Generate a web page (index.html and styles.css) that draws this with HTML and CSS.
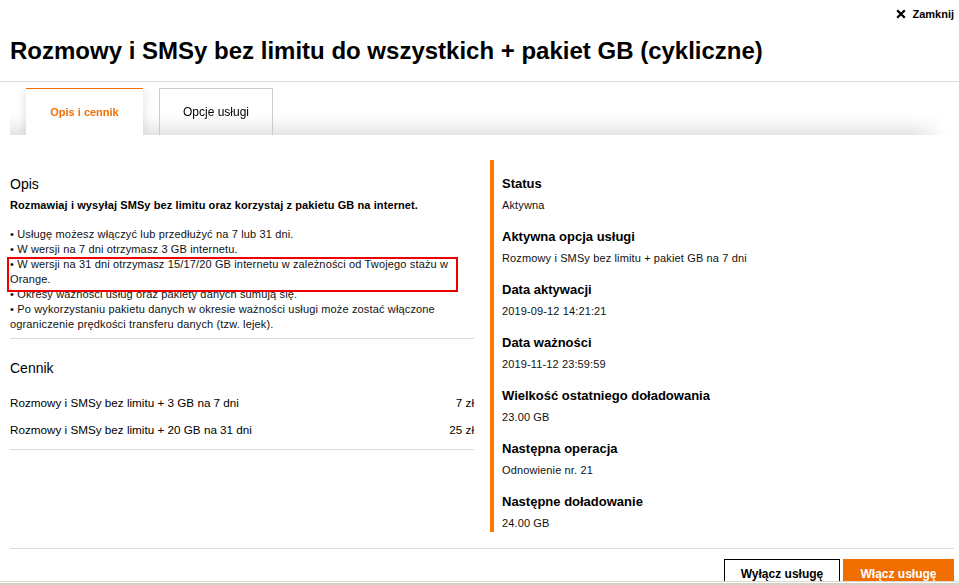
FILE: index.html
```html
<!DOCTYPE html>
<html lang="pl">
<head>
<meta charset="utf-8">
<title>Rozmowy i SMSy bez limitu</title>
<link rel="stylesheet" href="styles.css">
</head>
<body>
<div class="page">
  <header class="header">
    <div class="topbar">
      <a class="close" href="#">
        <svg class="close-icon" width="10" height="10" viewBox="0 0 10 10" aria-hidden="true">
          <path d="M1.2 1.2 L8.8 8.8 M8.8 1.2 L1.2 8.8" stroke="#000" stroke-width="2.3" fill="none"/>
        </svg>
        <span>Zamknij</span>
      </a>
    </div>
    <h1 class="title">Rozmowy i SMSy bez limitu do wszystkich + pakiet GB (cykliczne)</h1>
  </header>

  <nav class="tabs">
    <div class="tab tab-active">Opis i cennik</div>
    <div class="tab">Opcje usługi</div>
  </nav>

  <main class="content">
    <div class="left">
      <section class="desc">
        <h2 class="sec-title">Opis</h2>
        <p class="lead">Rozmawiaj i wysyłaj SMSy bez limitu oraz korzystaj z pakietu GB na internet.</p>
        <div class="bullets">
          <div>• Usługę możesz włączyć lub przedłużyć na 7 lub 31 dni.</div>
          <div>• W wersji na 7 dni otrzymasz 3 GB internetu.</div>
          <div class="highlight">• W wersji na 31 dni otrzymasz 15/17/20 GB internetu w zależności od Twojego stażu w<br>Orange.</div>
          <div>• Okresy ważności usług oraz pakiety danych sumują się.</div>
          <div>• Po wykorzystaniu pakietu danych w okresie ważności usługi może zostać włączone ograniczenie prędkości transferu danych (tzw. lejek).</div>
        </div>
      </section>
      <section class="prices">
        <h2 class="sec-title">Cennik</h2>
        <div class="price-list">
          <div class="price-row"><span>Rozmowy i SMSy bez limitu + 3 GB na 7 dni</span><span>7 zł</span></div>
          <div class="price-row"><span>Rozmowy i SMSy bez limitu + 20 GB na 31 dni</span><span>25 zł</span></div>
        </div>
      </section>
    </div>

    <dl class="right">
      <div class="info"><dt>Status</dt><dd>Aktywna</dd></div>
      <div class="info"><dt>Aktywna opcja usługi</dt><dd>Rozmowy i SMSy bez limitu + pakiet GB na 7 dni</dd></div>
      <div class="info"><dt>Data aktywacji</dt><dd>2019-09-12 14:21:21</dd></div>
      <div class="info"><dt>Data ważności</dt><dd>2019-11-12 23:59:59</dd></div>
      <div class="info"><dt>Wielkość ostatniego doładowania</dt><dd>23.00 GB</dd></div>
      <div class="info"><dt>Następna operacja</dt><dd>Odnowienie nr. 21</dd></div>
      <div class="info"><dt>Następne doładowanie</dt><dd>24.00 GB</dd></div>
    </dl>
  </main>

  <footer class="actions">
    <button class="btn btn-outline">Wyłącz usługę</button>
    <button class="btn btn-primary">Włącz usługę</button>
  </footer>
</div>
<div class="frame-edge"></div>
</body>
</html>
```

FILE: styles.css
```css
* { box-sizing: border-box; }

html, body {
  margin: 0;
  padding: 0;
  background: #fff;
}

body {
  font-family: "Liberation Sans", Arial, sans-serif;
  color: #000;
  font-size: 11px;
  width: 959px;
  height: 585px;
  overflow: hidden;
}

.page {
  height: 581px;
  overflow: hidden;
}

/* header */
.header {
  border-bottom: 1px solid #dddddd;
  height: 82px;
}

.topbar {
  height: 28px;
  display: flex;
  justify-content: flex-end;
  align-items: center;
  padding-right: 5px;
}

.close {
  display: flex;
  align-items: center;
  gap: 6px;
  color: #000;
  text-decoration: none;
  font-weight: bold;
  font-size: 11px;
}

.close-icon {
  display: block;
}

.title {
  margin: 8px 0 0 10px;
  font-size: 24px;
  line-height: 30px;
  font-weight: bold;
}

/* tabs */
.tabs {
  margin: 6px 11px 0 10px;
  height: 47px;
  display: flex;
  gap: 16px;
  padding-left: 16px;
  overflow: hidden;
  background: linear-gradient(to bottom, #ffffff 0, #ffffff 55%, #f3f3f3 80%, #e4e4e4 100%);
  -webkit-mask-image: linear-gradient(to right, #000 0, #000 96%, transparent 100%);
  mask-image: linear-gradient(to right, #000 0, #000 96%, transparent 100%);
}

.tab {
  height: 47px;
  display: flex;
  align-items: center;
  justify-content: center;
  font-size: 12px;
  color: #000;
  width: 114px;
  border: 1px solid #cccccc;
  border-bottom: none;
}

.tab-active {
  width: 117px;
  font-size: 11px;
  border: none;
  border-top: 1px solid #f16e00;
  background: #fff;
  color: #f16e00;
  font-weight: bold;
  box-shadow: 0 0 10px rgba(0, 0, 0, 0.14);
}

/* content */
.content {
  display: flex;
  gap: 16px;
  padding: 25px 0 16px 10px;
}

.left {
  width: 464px;
  padding-top: 16px;
}

.sec-title {
  margin: 0;
  font-size: 14px;
  line-height: 16px;
  font-weight: normal;
  color: #000;
}

.desc {
  border-bottom: 1px solid #dddddd;
  padding-bottom: 6px;
}

.lead {
  margin: 6px 0 15px;
  font-weight: bold;
  line-height: 14px;
  letter-spacing: 0.1px;
}

.bullets {
  line-height: 15px;
  color: #111;
  letter-spacing: 0.15px;
}

.highlight {
  position: relative;
}

.highlight::after {
  content: "";
  position: absolute;
  left: -3px;
  top: 0;
  width: 447px;
  height: 31px;
  border: 2px solid #ee0000;
}

.prices {
  padding: 21px 0 12px;
  border-bottom: 1px solid #dddddd;
}

.price-list {
  margin-top: 20px;
  display: flex;
  flex-direction: column;
  gap: 13px;
}

.price-row {
  display: flex;
  justify-content: space-between;
  line-height: 14px;
  font-size: 11.7px;
  color: #000;
}

/* right column */
.right {
  margin: 0;
  width: 463px;
  border-left: 4px solid #ff7900;
  padding: 16px 0 2px 8px;
}

.info {
  margin-bottom: 17px;
}

.info:last-child {
  margin-bottom: 0;
}

.info dt {
  font-size: 13px;
  line-height: 16px;
  font-weight: bold;
  margin-bottom: 6px;
}

.info dd {
  margin: 0;
  line-height: 14px;
  color: #111;
  letter-spacing: 0.13px;
}

/* actions */
.actions {
  margin: 0 5px 0 10px;
  border-top: 1px solid #dddddd;
  padding-top: 10px;
  display: flex;
  justify-content: flex-end;
  gap: 3px;
}

.btn {
  font-family: "Liberation Sans", Arial, sans-serif;
  font-size: 12px;
  font-weight: bold;
  height: 36px;
  line-height: 28px;
  padding: 0 0 6px;
  cursor: pointer;
}

.btn-outline {
  width: 116px;
  background: #fff;
  color: #000;
  border: 1px solid #000;
}

.btn-primary {
  width: 111px;
  background: #f16e00;
  color: #fff;
  border: 1px solid #f16e00;
}

.frame-edge {
  height: 4px;
  background: linear-gradient(to bottom, #dcd9d2 0, #dcd9d2 1px, #ffffff 1px, #ffffff 2px, #d4d0c8 2px);
}
```
